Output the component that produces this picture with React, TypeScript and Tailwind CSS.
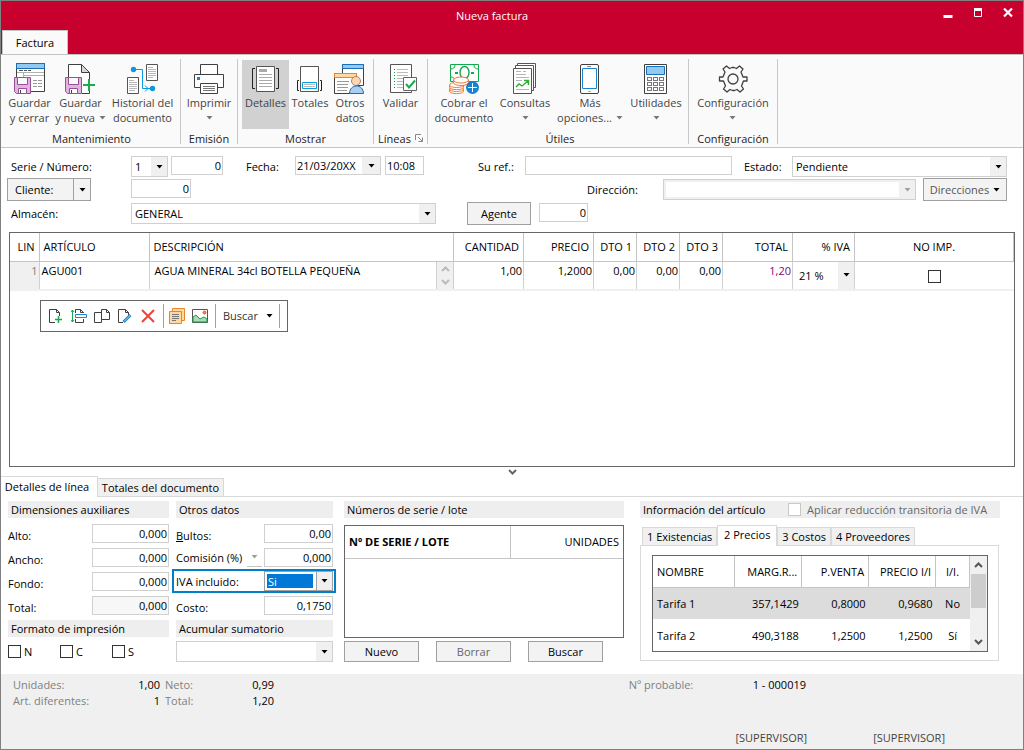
import { useState } from 'react';
import type { ReactNode } from 'react';
import clsx from 'clsx';

interface Tarifa {
  nombre: string;
  margen: string;
  venta: string;
  precio: string;
  incluido: string;
}

const TARIFAS: Tarifa[] = [
  { nombre: 'Tarifa 1', margen: '357,1429', venta: '0,8000', precio: '0,9680', incluido: 'No' },
  { nombre: 'Tarifa 2', margen: '490,3188', venta: '1,2500', precio: '1,2500', incluido: 'Sí' },
];

/* ---------- Small shared pieces ---------- */

function Caret({ className = 'text-black' }: { className?: string }) {
  return (
    <svg width="7" height="4" viewBox="0 0 7 4" className={clsx('shrink-0', className)}>
      <path d="M0.5 0h6L3.5 3.5z" fill="currentColor" />
    </svg>
  );
}

function Chevron({ up = false, className }: { up?: boolean; className?: string }) {
  return (
    <svg width="9" height="6" viewBox="0 0 9 6" className={className}>
      <path d={up ? 'M1 5l3.5-3.5L8 5' : 'M1 1l3.5 3.5L8 1'} fill="none" stroke="currentColor" strokeWidth="2" />
    </svg>
  );
}

interface SelectBoxProps {
  id: string;
  value: string;
  label?: string;
  disabled?: boolean;
  className?: string;
}

function SelectBox({ id, value, label, disabled, className }: SelectBoxProps) {
  return (
    <div className={clsx('relative flex h-[21px] border border-[#d0d0d0]', className)}>
      <select
        id={id}
        aria-label={label}
        disabled={disabled}
        defaultValue={value}
        className={clsx(
          'w-full appearance-none bg-white pl-[3px] pr-4 outline-none',
          disabled && 'border-2 border-[#f0f0f0]'
        )}
      >
        <option>{value}</option>
      </select>
      <span className="pointer-events-none absolute inset-y-0 right-0 flex w-4 items-center justify-center bg-[#f0f0f0]">
        <Caret className={disabled ? 'text-[#a0a0a0]' : 'text-black'} />
      </span>
    </div>
  );
}

interface TextBoxProps {
  id: string;
  value?: string;
  label?: string;
  readOnly?: boolean;
  className?: string;
}

function TextBox({ id, value = '', label, readOnly, className }: TextBoxProps) {
  return (
    <input
      id={id}
      type="text"
      aria-label={label}
      defaultValue={value}
      readOnly={readOnly}
      className={clsx('h-[19px] border border-[#d0d0d0] px-px outline-none', readOnly ? 'bg-[#f7f7f7]' : 'bg-white', className)}
    />
  );
}

function SectionTitle({ children }: { children: ReactNode }) {
  return <h2 className="flex h-[17px] items-center bg-[#eeeeee] px-[3px]">{children}</h2>;
}

function PushButton({ children, disabled, className }: { children: ReactNode; disabled?: boolean; className?: string }) {
  return (
    <button
      type="button"
      disabled={disabled}
      className={clsx('flex items-center justify-center border border-[#a0a0a0] bg-[#f3f3f3] disabled:text-[#666666]', className)}
    >
      {children}
    </button>
  );
}

/* ---------- Ribbon icons ---------- */

function RibbonSvg({ children }: { children: ReactNode }) {
  return (
    <svg width="32" height="32" viewBox="0 0 32 32" fill="none" className="shrink-0">
      {children}
    </svg>
  );
}

function Floppy() {
  return (
    <g>
      <path d="M0.5 14.5h16v16h-14l-2-2z" fill="#dfb4df" stroke="#9b4f9b" />
      <path d="M3.5 14.5h10v7h-10z" fill="#fafafa" stroke="#9b4f9b" />
      <path d="M4.5 25.5h8v5h-8z" fill="#fff" stroke="#9b4f9b" />
      <path d="M6.5 27v3" stroke="#444" />
    </g>
  );
}

function SaveCloseIcon() {
  return (
    <RibbonSvg>
      <path d="M2.5 0.5h28v28h-28z" fill="#fff" stroke="#404040" />
      <path d="M2.5 0.5h28v5h-28z" fill="#91c9f0" stroke="#1a6fb5" />
      <path d="M5 7.5h4M10 7.5h3M14 7.5h3" stroke="#555" />
      <path d="M3 9.5h27M9.5 10v4M10 12.5h20" stroke="#b0b0b0" />
      <path d="M19 17.5h4M24 17.5h4M19 20.5h4M24 20.5h4M19 23.5h4M24 23.5h4" stroke="#999" />
      <Floppy />
    </RibbonSvg>
  );
}

function SaveNewIcon() {
  return (
    <RibbonSvg>
      <path d="M3.5 14V1.5h13l8 8V30.5H16V14z" fill="#fff" />
      <path d="M3.5 14V1.5h13l8 8V17M17 30.5h7.5V28" stroke="#404040" />
      <path d="M16.5 1.5v8h8z" fill="#d8d8d8" stroke="#404040" />
      <Floppy />
      <path d="M18 22h12M24 16v12" stroke="#1aab4f" strokeWidth="2" />
    </RibbonSvg>
  );
}

function HistoryIcon() {
  return (
    <RibbonSvg>
      <path d="M0.5 14.5h11v16h-11zM19.5 1.5h11v16h-11z" fill="#fff" stroke="#555" />
      <path
        d="M2 17.5h5M2 19.5h8M2 21.5h8M2 23.5h8M2 25.5h8M2 27.5h6M21 4.5h5M21 6.5h8M21 8.5h8M21 10.5h8M21 12.5h8M21 14.5h5"
        stroke="#b8b8b8"
      />
      <path d="M6 6.5h9.5v19H26M18 22.5l3 3-3 3" stroke="#0a9ae0" />
      <circle cx="6.5" cy="6.5" r="2.7" fill="#0a9ae0" />
      <circle cx="25.5" cy="25.5" r="2.7" fill="#0a9ae0" />
    </RibbonSvg>
  );
}

function PrinterIcon() {
  return (
    <RibbonSvg>
      <path d="M7.5 1.5h17v10h-17z" fill="#fff" stroke="#404040" />
      <path d="M1.5 11.5h29v13h-29z" fill="#fff" stroke="#404040" />
      <path d="M4 14h3v3H4z" fill="#1d84cc" />
      <path d="M7.5 20.5h17v10h-17z" fill="#fff" stroke="#404040" />
      <path d="M10 23.5h12M10 25.5h12M10 27.5h12" stroke="#777" />
    </RibbonSvg>
  );
}

function DetailsIcon() {
  return (
    <RibbonSvg>
      <path d="M6.5 3.5h18v25h-18z" fill="#fff" stroke="#555" />
      <path d="M9 6h8v3H9z" fill="#aaa" />
      <path d="M9 11.5h13M9 14.5h13M9 17.5h13M9 20.5h13M9 23.5h13" stroke="#aaa" />
      <path d="M5 5.5H2.5v20H5M26 5.5h2.5v20H26" stroke="#222" />
    </RibbonSvg>
  );
}

function TotalsIcon() {
  return (
    <RibbonSvg>
      <path d="M6.5 3.5h18v25h-18z" fill="#fff" stroke="#555" />
      <path d="M8.5 19.5h14v6h-14z" stroke="#0a9ae0" />
      <path d="M10 21.5h11M10 23.5h11" stroke="#bbb" />
      <path d="M5 17.5H3.5v10H5M26 17.5h1.5v10H26" stroke="#222" />
    </RibbonSvg>
  );
}

function OtherDataIcon() {
  return (
    <RibbonSvg>
      <path d="M8.5 1.5h21v21h-21z" fill="#fff" stroke="#404040" />
      <path d="M8.5 1.5h21v4h-21z" fill="#91c9f0" stroke="#1a6fb5" />
      <path d="M0.5 10.5h22v20h-22z" fill="#fff" stroke="#404040" />
      <path d="M0.5 10.5h22v4h-22z" fill="#ffd9a0" stroke="#e8852a" />
      <path d="M3 18.5h12M3 21.5h11M3 24.5h11M3 27.5h10" stroke="#999" />
      <circle cx="22" cy="18" r="4.5" fill="#fbd7b8" stroke="#b98058" />
      <path d="M15.5 30.5c0-10 14-10 14 0z" fill="#a9d0f0" stroke="#1a6fb5" />
    </RibbonSvg>
  );
}

function ValidateIcon() {
  return (
    <RibbonSvg>
      <path d="M5.5 1.5h21v28h-21z" fill="#fff" stroke="#555" />
      <path d="M12 6.5h11M12 9.5h11M12 12.5h11M12 15.5h6M12 18.5h6M12 21.5h6M12 24.5h6" stroke="#bbb" />
      <path d="M9 6.5h1M9 12.5h1M9 18.5h1M9 24.5h1" stroke="#c33" />
      <path d="M9 9.5h1M9 15.5h1M9 21.5h1" stroke="#1aab4f" />
      <path d="M18.5 14.5h13v13h-13z" fill="#fff" stroke="#666" />
      <path d="M21 21l3 3.5 6-7" stroke="#1aab4f" strokeWidth="2" />
    </RibbonSvg>
  );
}

function ChargeIcon() {
  return (
    <RibbonSvg>
      <path d="M2.5 1.5h28v17h-28z" fill="#fff" stroke="#12a84c" />
      <path d="M7 2c0 3-2 4-4 4M26 2c0 3 2 4 4 4M3 14c2 0 4 1 4 4" stroke="#12a84c" />
      <ellipse cx="16.5" cy="9.5" rx="4.5" ry="6" stroke="#12a84c" strokeWidth="1.4" />
      <path d="M7 9h3v2H7zM23 9h3v2h-3z" fill="#12a84c" />
      <g fill="#fff" stroke="#ee7d3a">
        <path d="M1.5 26v2c0 3.5 14 3.5 14 0v-2" />
        <ellipse cx="8.5" cy="26" rx="7" ry="2.5" />
        <path d="M1.5 22v2c0 3.5 14 3.5 14 0v-2" />
        <ellipse cx="8.5" cy="22" rx="7" ry="2.5" />
        <path d="M5.5 17v2.5c0 4 15 4 15 0V17" />
        <ellipse cx="13" cy="17" rx="7.5" ry="3" />
      </g>
      <circle cx="24.5" cy="24.5" r="6.5" fill="#1583cf" />
      <path d="M20 24.5h9M24.5 20v9" stroke="#fff" />
    </RibbonSvg>
  );
}

function QueriesIcon() {
  return (
    <RibbonSvg>
      <path d="M8.5 0.5h18v24h-18z" fill="#fff" stroke="#555" />
      <path d="M6.5 2.5h18v25h-18z" fill="#fff" stroke="#555" />
      <path d="M4.5 5.5h18v25h-18z" fill="#fff" stroke="#555" />
      <path d="M7 8.5h5M14 8.5h3M7 11.5h10M7 14.5h13M7 17.5h6M7 26.5h13" stroke="#b5b5b5" />
      <path d="M7 24l3-3 3 2 6-5M15 17.5h4.5V22" stroke="#2fae2f" strokeWidth="1.4" />
    </RibbonSvg>
  );
}

function PhoneIcon() {
  return (
    <RibbonSvg>
      <rect x="6.5" y="1.5" width="18" height="29" rx="1.5" fill="#fff" stroke="#404040" />
      <path d="M8.5 5.5h14v20h-14z" fill="#fff" stroke="#1d84cc" />
      <path d="M13 3.5h4M14.5 28.5h2" stroke="#888" />
    </RibbonSvg>
  );
}

function CalculatorIcon() {
  return (
    <RibbonSvg>
      <path d="M4.5 1.5h22v29h-22z" fill="#fff" stroke="#404040" />
      <path d="M6.5 3.5h18v8h-18z" fill="#91c9f0" stroke="#1a6fb5" />
      {[14.5, 19.5, 24.5].map((y) =>
        [7.5, 13.5, 19.5].map((x) => <rect key={`${x}-${y}`} x={x} y={y} width="4" height="3" stroke="#777" />)
      )}
    </RibbonSvg>
  );
}

function GearIcon() {
  return (
    <RibbonSvg>
      <path
        d="M2.5 14h3.5l2-5-2-3 3.5-3 3 2.5 2.5-1h2l2.5 1 3-2.5 3.5 3-2 3 2 5H30v4h-3.5l-2 5 2 3-3.5 3-3-2.5-2.5 1h-2l-2.5-1-3 2.5-3.5-3 2-3-2-5H2.5z"
        stroke="#404040"
        strokeWidth="1.3"
        strokeLinejoin="round"
      />
      <circle cx="16" cy="16" r="5" stroke="#404040" strokeWidth="1.3" />
    </RibbonSvg>
  );
}

/* ---------- Ribbon ---------- */

interface RibbonButtonProps {
  icon: ReactNode;
  lines: string[];
  caret?: boolean;
  active?: boolean;
  className?: string;
}

function RibbonButton({ icon, lines, caret, active, className }: RibbonButtonProps) {
  return (
    <button
      type="button"
      className={clsx(
        'flex h-[69px] flex-col items-center pt-[3px] leading-[15px] whitespace-nowrap text-[#444444]',
        active && 'bg-[#d1d1d1]',
        className
      )}
    >
      {icon}
      <span>{lines[0]}</span>
      <span className="flex h-[15px] items-center gap-1">
        {lines[1]}
        {caret && <Caret className="text-[#777777]" />}
      </span>
    </button>
  );
}

interface RibbonGroupProps {
  title: string;
  launcher?: boolean;
  children: ReactNode;
  className?: string;
}

function RibbonGroup({ title, launcher, children, className }: RibbonGroupProps) {
  return (
    <section className={clsx('flex h-[85px] flex-col justify-between border-r border-[#c8c8c8] pt-px', className)}>
      <div className="flex justify-center">{children}</div>
      <h2 className="flex h-3 items-center justify-center gap-1 text-[#222222]">
        {title}
        {launcher && (
          <svg width="8" height="8" viewBox="0 0 8 8" fill="none" stroke="#888">
            <path d="M0.5 6V0.5H6M3 3l4 4M7.5 3.5v4h-4" />
          </svg>
        )}
      </h2>
    </section>
  );
}

function Ribbon() {
  return (
    <div className="flex h-[94px] border-t border-b border-[#c4c4c4] bg-[#fafafa] pt-1">
      <RibbonGroup title="Mantenimiento" className="w-[180px] pl-0.5">
        <RibbonButton icon={<SaveCloseIcon />} lines={['Guardar', 'y cerrar']} className="w-[50px]" />
        <RibbonButton icon={<SaveNewIcon />} lines={['Guardar', 'y nueva']} caret className="w-[52px]" />
        <RibbonButton icon={<HistoryIcon />} lines={['Historial del', 'documento']} className="w-[72px]" />
      </RibbonGroup>
      <RibbonGroup title="Emisión" className="w-[57px]">
        <RibbonButton icon={<PrinterIcon />} lines={['Imprimir']} caret />
      </RibbonGroup>
      <RibbonGroup title="Mostrar" className="w-[136px]">
        <RibbonButton icon={<DetailsIcon />} lines={['Detalles']} active className="w-[47px]" />
        <RibbonButton icon={<TotalsIcon />} lines={['Totales']} className="w-[42px]" />
        <RibbonButton icon={<OtherDataIcon />} lines={['Otros', 'datos']} className="w-[38px]" />
      </RibbonGroup>
      <RibbonGroup title="Líneas" launcher className="w-[54px]">
        <RibbonButton icon={<ValidateIcon />} lines={['Validar']} />
      </RibbonGroup>
      <RibbonGroup title="Útiles" className="w-[261px] pl-1">
        <RibbonButton icon={<ChargeIcon />} lines={['Cobrar el', 'documento']} className="w-[62px]" />
        <RibbonButton icon={<QueriesIcon />} lines={['Consultas']} caret className="w-[60px]" />
        <RibbonButton icon={<PhoneIcon />} lines={['Más', 'opciones...']} caret className="w-[70px]" />
        <RibbonButton icon={<CalculatorIcon />} lines={['Utilidades']} caret className="w-[62px]" />
      </RibbonGroup>
      <RibbonGroup title="Configuración" className="w-[89px]">
        <RibbonButton icon={<GearIcon />} lines={['Configuración']} caret />
      </RibbonGroup>
    </div>
  );
}

/* ---------- Title bar ---------- */

function TitleBar() {
  return (
    <header className="relative flex h-[53px] items-end bg-[#c8002d] px-px">
      <button type="button" className="h-6 w-[66px] border-x border-t border-[#c4c4c4] bg-[#fafafa]">
        Factura
      </button>
      <h1 className="absolute inset-x-0 top-[7px] mr-10 text-center text-white">Nueva factura</h1>
      <div className="absolute top-1.5 right-2.5 flex items-center gap-5 text-white">
        <button type="button" aria-label="Minimizar">
          <svg width="10" height="12" viewBox="0 0 10 12">
            <path d="M0.5 8h9v3h-9z" fill="currentColor" />
          </svg>
        </button>
        <button type="button" aria-label="Maximizar">
          <svg width="10" height="12" viewBox="0 0 10 12">
            <path d="M1.5 2v7.5h7V2z" fill="none" stroke="currentColor" />
            <path d="M1 1h8v3H1z" fill="currentColor" />
          </svg>
        </button>
        <button type="button" aria-label="Cerrar">
          <svg width="10" height="12" viewBox="0 0 10 12">
            <path d="M1 1.500l8 8M9 1.500l-8 8" stroke="currentColor" strokeWidth="2.2" />
          </svg>
        </button>
      </div>
    </header>
  );
}

/* ---------- Invoice header fields ---------- */

function InvoiceHeader() {
  return (
    <div className="pt-[7px] pr-4 pl-[6px]">
      <div className="flex h-6 items-start pt-px">
        <label htmlFor="serie" className="w-[124px] pt-[3px] pl-1">
          Serie / Número:
        </label>
        <SelectBox id="serie" value="1" className="w-[37px]" />
        <TextBox id="numero" label="Número" value="0" className="ml-[3px] w-[52px] text-right" />
        <label htmlFor="fecha" className="ml-[23px] w-[49px] pt-[3px]">
          Fecha:
        </label>
        <div className="relative">
          <TextBox id="fecha" value="21/03/20XX" className="w-[86px]" />
          <span className="pointer-events-none absolute top-px right-px flex h-[17px] w-[18px] items-center justify-center bg-[#f0f0f0]">
            <Caret />
          </span>
        </div>
        <TextBox id="hora" label="Hora" value="10:08" className="ml-1 w-[39px]" />
        <label htmlFor="ref" className="ml-[54px] w-[47px] pt-[3px]">
          Su ref.:
        </label>
        <TextBox id="ref" className="min-w-0 flex-[20]" />
        <label htmlFor="estado" className="ml-3 w-12 pt-[3px]">
          Estado:
        </label>
        <SelectBox id="estado" value="Pendiente" className="min-w-0 flex-[21]" />
      </div>
      <div className="flex h-6 items-start">
        <div className="-mt-px flex h-[23px] w-[84px] border border-[#a0a0a0] bg-[#f3f3f3]">
          <button type="button" className="flex-1 border-r border-[#a0a0a0] pl-[7px] text-left">
            Cliente:
          </button>
          <button type="button" aria-label="Opciones de cliente" className="flex w-4 items-center justify-center">
            <Caret />
          </button>
        </div>
        <TextBox id="cliente" label="Cliente" value="0" className="ml-10 w-[60px] text-right" />
        <label htmlFor="direccion" className="ml-auto w-[76px] pt-[3px]">
          Dirección:
        </label>
        <SelectBox id="direccion" value="" disabled className="w-[253px]" />
        <PushButton className="-mt-px ml-[7px] h-[23px] w-[84px] gap-1 text-[#555555]">
          Direcciones <Caret />
        </PushButton>
      </div>
      <div className="flex h-[29px] items-start">
        <label htmlFor="almacen" className="w-[124px] pt-[3px] pl-1">
          Almacén:
        </label>
        <SelectBox id="almacen" value="GENERAL" className="w-[305px]" />
        <PushButton className="-mt-px ml-[31px] h-[23px] w-16">Agente</PushButton>
        <TextBox id="agente" label="Agente" value="0" className="ml-2 w-[49px] text-right" />
      </div>
    </div>
  );
}

/* ---------- Line grid ---------- */

function LineToolbar() {
  const button = 'flex h-5 w-[23px] items-center justify-center';
  return (
    <div className="mt-[9px] ml-[30px] flex h-8 w-[248px] items-center border border-[#666666] bg-white pl-[3px]">
      <button type="button" aria-label="Nueva línea" className={button}>
        <svg width="16" height="16" viewBox="0 0 16 16" fill="none" stroke="#404040">
          <path d="M7 14.5H1.500v-13h7l3 3V8M8.500 1.500v3h3" />
          <path d="M7 11.500h7M10.500 8v7" stroke="#1aab4f" strokeWidth="1.5" />
        </svg>
      </button>
      <button type="button" aria-label="Insertar línea" className={button}>
        <svg width="16" height="16" viewBox="0 0 16 16" fill="none" stroke="#404040">
          <path d="M4.5 5V1.500h5l3 3V5M9.500 1.500v3h3M4.500 11v3.500h8V11" />
          <path d="M1.5 2v12M0 4l1.500-2L3 4M0 12l1.500 2L3 12" stroke="#1aab4f" />
          <path d="M4.5 6.500h11v3h-11z" fill="#fff" stroke="#1d84cc" />
        </svg>
      </button>
      <button type="button" aria-label="Duplicar línea" className={button}>
        <svg width="16" height="16" viewBox="0 0 16 16" fill="none" stroke="#404040">
          <path d="M7 4.500H0.500v10h7V11" />
          <path d="M7.500 1.500h5l3 3v7h-8zM12.500 1.500v3h3" fill="#fff" />
        </svg>
      </button>
      <button type="button" aria-label="Modificar línea" className={button}>
        <svg width="16" height="16" viewBox="0 0 16 16" fill="none" stroke="#404040">
          <path d="M6 14.500H1.500v-13h7l3 3V7M8.500 1.500v3h3" />
          <path d="M6.500 14l7-7" stroke="#1d84cc" strokeWidth="3" />
          <path d="M7 13.500l6.500-6.500" stroke="#9fd0f2" />
        </svg>
      </button>
      <button type="button" aria-label="Eliminar línea" className={button}>
        <svg width="16" height="16" viewBox="0 0 16 16" fill="none" stroke="#ef4136" strokeWidth="2">
          <path d="M2 2l12 12M14 2L2 14" />
        </svg>
      </button>
      <span className="ml-1 h-6 w-px bg-[#a0a0a0]" />
      <button type="button" aria-label="Notas" className={clsx(button, 'ml-px')}>
        <svg width="16" height="16" viewBox="0 0 16 16" fill="#ffd9a0" stroke="#e8852a">
          <path d="M3.500 0.500h12v12h-12z" />
          <path d="M0.500 3.500h12v12h-12z" />
          <path d="M3 6.500h7M3 8.500h7M3 10.500h7M3 12.500h4" stroke="#777" />
        </svg>
      </button>
      <button type="button" aria-label="Imagen" className={button}>
        <svg width="16" height="16" viewBox="0 0 16 16" fill="none" stroke="#555">
          <path d="M0.500 1.500h15v13h-15z" fill="#fff" />
          <path d="M1 9l3-2 4 4 4-2 3 2v3H1z" fill="#a8dcb4" stroke="#1a9a48" />
          <circle cx="12.5" cy="4.5" r="1.5" fill="#f08050" stroke="#e0602a" />
        </svg>
      </button>
      <span className="ml-1 h-6 w-px bg-[#a0a0a0]" />
      <button type="button" className="flex h-5 items-center gap-2 pl-[7px] text-[#333333]">
        Buscar <Caret />
      </button>
      <span className="ml-1.5 h-6 w-px bg-[#a0a0a0]" />
    </div>
  );
}

const HEADINGS = ['LIN', 'ARTÍCULO', 'DESCRIPCIÓN', 'CANTIDAD', 'PRECIO', 'DTO 1', 'DTO 2', 'DTO 3', 'TOTAL', '% IVA', 'NO IMP.'];

function LineGrid() {
  const cell = 'border border-[#d0d0d0] bg-white pt-px pr-px align-top';
  return (
    <div className="mr-2 ml-2 flex-1 border border-[#666666] bg-white">
      <table className="w-full table-fixed border-collapse">
        <colgroup>
          <col className="w-[29px]" />
          <col className="w-[110px]" />
          <col />
          <col className="w-[70px]" />
          <col className="w-[70px]" />
          <col className="w-[43px]" />
          <col className="w-[43px]" />
          <col className="w-[43px]" />
          <col className="w-[70px]" />
          <col className="w-[62px]" />
          <col className="w-[159px]" />
        </colgroup>
        <thead>
          <tr className="h-7">
            {HEADINGS.map((heading, i) => (
              <th
                key={heading}
                className={clsx(
                  'border-r border-b border-[#c4c4c4] px-1 font-normal',
                  i === 1 || i === 2 ? 'text-left' : i === 10 ? 'text-center' : 'text-right'
                )}
              >
                {heading}
              </th>
            ))}
          </tr>
        </thead>
        <tbody>
          <tr className="border-b-2 border-[#f0f0f0] text-right">
            <td className="border-r border-[#d0d0d0] bg-[#f0f0f0] pt-px pr-px align-top text-[#808080]">1</td>
            <td className={clsx(cell, 'pl-0.5 text-left')}>AGU001</td>
            <td className="border border-[#d0d0d0] p-0 text-left">
              <div className="flex h-[27px]">
                <span className="flex-1 pt-px pl-[5px]">AGUA MINERAL 34cl BOTELLA PEQUEÑA</span>
                <span className="flex w-[17px] flex-col items-center justify-between border-l border-[#d0d0d0] bg-[#f0f0f0] py-1 text-[#bbbbbb]">
                  <Chevron up />
                  <Chevron />
                </span>
              </div>
            </td>
            <td className={cell}>1,00</td>
            <td className={cell}>1,2000</td>
            <td className={cell}>0,00</td>
            <td className={cell}>0,00</td>
            <td className={cell}>0,00</td>
            <td className={clsx(cell, 'text-[#800080]')}>1,20</td>
            <td className="border border-[#d0d0d0] p-0">
              <div className="relative flex h-[27px]">
                <select aria-label="% IVA" defaultValue="21 %" className="w-full appearance-none bg-white pl-1.5 outline-none">
                  <option>21 %</option>
                </select>
                <span className="pointer-events-none absolute inset-y-0 right-0 flex w-4 items-center justify-center bg-[#f0f0f0]">
                  <Caret />
                </span>
              </div>
            </td>
            <td className="text-center">
              <input type="checkbox" aria-label="No imprimir" className="size-[13px] appearance-none border border-[#333333] align-middle" />
            </td>
          </tr>
        </tbody>
      </table>
      <LineToolbar />
    </div>
  );
}

/* ---------- Line details ---------- */

interface FieldRowProps {
  id: string;
  label: ReactNode;
  value: string;
  readOnly?: boolean;
  width: string;
}

function FieldRow({ id, label, value, readOnly, width }: FieldRowProps) {
  return (
    <div className="flex h-6 items-start justify-between">
      <label htmlFor={id} className="pt-1">
        {label}
      </label>
      <TextBox id={id} value={value} readOnly={readOnly} className={clsx('text-right', width)} />
    </div>
  );
}

function Dimensions() {
  return (
    <section className="w-[161px]">
      <SectionTitle>Dimensiones auxiliares</SectionTitle>
      <div className="pt-1.5">
        <FieldRow id="alto" label="Alto:" value="0,000" width="w-[77px]" />
        <FieldRow id="ancho" label="Ancho:" value="0,000" width="w-[77px]" />
        <FieldRow id="fondo" label="Fondo:" value="0,000" width="w-[77px]" />
        <FieldRow id="total" label="Total:" value="0,000" readOnly width="w-[77px]" />
      </div>
      <SectionTitle>Formato de impresión</SectionTitle>
      <div className="flex pt-[7px]">
        {['N', 'C', 'S'].map((format) => (
          <label key={format} className="flex w-[52px] items-center gap-[3px]">
            <input type="checkbox" className="size-[13px] appearance-none border border-[#333333] bg-white" />
            {format}
          </label>
        ))}
      </div>
    </section>
  );
}

function OtherData() {
  return (
    <section className="ml-[7px] w-[157px]">
      <SectionTitle>Otros datos</SectionTitle>
      <div className="pt-1.5">
        <FieldRow
          id="bultos"
          label={
            <>
              <span className="underline">B</span>ultos:
            </>
          }
          value="0,00"
          width="w-[69px]"
        />
        <div className="flex h-[21px] items-start">
          <label htmlFor="comision" className="flex-1 pt-0.5">
            Comisión (%)
          </label>
          <button type="button" aria-label="Tipo de comisión" className="mr-0.5 flex h-[19px] w-[15px] items-center justify-center border-b border-[#c4c4c4]">
            <Caret className="text-[#a0a0a0]" />
          </button>
          <TextBox id="comision" value="0,000" className="w-[69px] text-right" />
        </div>
        <div className="-mr-[3px] -ml-1 flex h-6 items-center border-2 border-[#0080c8] pl-0.5">
          <label htmlFor="iva" className="flex-1">
            IVA incluido:
          </label>
          <div className="relative mr-px flex h-5 w-[69px] border border-[#a0a0a0] bg-white p-0.5">
            <select id="iva" defaultValue="Si" className="w-[46px] appearance-none bg-[#0078d7] pl-px text-white outline-none">
              <option>Si</option>
            </select>
            <span className="pointer-events-none absolute inset-y-0 right-0 flex w-4 items-center justify-center border-l border-[#a0a0a0] bg-[#f0f0f0]">
              <Caret />
            </span>
          </div>
        </div>
        <div className="pt-[3px]">
          <FieldRow id="costo" label="Costo:" value="0,1750" width="w-[69px]" />
        </div>
      </div>
      <SectionTitle>
        <label htmlFor="sumatorio">Acumular sumatorio</label>
      </SectionTitle>
      <SelectBox id="sumatorio" value="" className="mt-1" />
    </section>
  );
}

function SerialNumbers() {
  return (
    <section className="ml-[11px] w-[280px]">
      <SectionTitle>Números de serie / lote</SectionTitle>
      <div className="mt-[7px] h-[113px] border border-[#666666] bg-white">
        <table className="w-full table-fixed border-collapse">
          <thead>
            <tr className="h-8 border-b border-[#c4c4c4]">
              <th className="w-[165px] border-r border-[#c4c4c4] px-1 text-left font-bold">Nº DE SERIE / LOTE</th>
              <th className="px-1 text-right font-normal">UNIDADES</th>
            </tr>
          </thead>
        </table>
      </div>
      <div className="mt-[3px] flex gap-[17px]">
        <PushButton className="h-[21px] w-[75px]">Nuevo</PushButton>
        <PushButton disabled className="h-[21px] w-[75px]">
          Borrar
        </PushButton>
        <PushButton className="h-[21px] w-[75px]">Buscar</PushButton>
      </div>
    </section>
  );
}

const ARTICLE_TABS = ['1 Existencias', '2 Precios', '3 Costos', '4 Proveedores'];

function ArticleInfo() {
  const [tab, setTab] = useState('2 Precios');

  return (
    <section className="ml-4 w-[360px]">
      <div className="flex h-[17px] items-center bg-[#eeeeee] pl-[3px]">
        <h2 className="w-[145px]">Información del artículo</h2>
        <label className="flex items-center gap-1.5 text-[#666666]">
          <input type="checkbox" className="size-[13px] appearance-none border border-[#c8c8c8] bg-white" />
          Aplicar reducción transitoria de IVA
        </label>
      </div>
      <div className="mt-[7px] flex h-5 items-end pl-0.5">
        {ARTICLE_TABS.map((name) => (
          <button
            key={name}
            type="button"
            onClick={() => setTab(name)}
            className={clsx(
              'border-x border-t border-[#d9d9d9] px-1 whitespace-nowrap',
              name === tab ? 'relative z-10 -mb-px h-[21px] bg-white pb-1' : 'h-[18px] bg-[#f0f0f0]',
              name === '2 Precios' && 'w-[60px]'
            )}
          >
            {name}
          </button>
        ))}
      </div>
      <div className="mr-px h-[116px] border border-[#d9d9d9] bg-white pt-[9px] pr-[10px] pl-[11px]">
        <div className="flex h-[97px] border border-[#666666]">
          <table className="flex-1 table-fixed border-collapse">
            <thead>
              <tr className="h-[31px] border-b border-[#c4c4c4]">
                <th className="w-[82px] border-r border-[#c4c4c4] px-1 text-left font-normal">NOMBRE</th>
                <th className="w-[67px] border-r border-[#c4c4c4] px-1 text-right font-normal">MARG.R...</th>
                <th className="w-[67px] border-r border-[#c4c4c4] px-1 text-right font-normal">P.VENTA</th>
                <th className="w-[67px] border-r border-[#c4c4c4] px-1 text-right font-normal whitespace-nowrap">PRECIO I/I</th>
                <th className="w-[34px] border-r border-[#c4c4c4] font-normal">I/I.</th>
              </tr>
            </thead>
            <tbody>
              {TARIFAS.map((tarifa, i) => (
                <tr key={tarifa.nombre} className={clsx('h-8 text-right', i === 0 && 'bg-[#dcdcdc]')}>
                  <td className="px-1 text-left">{tarifa.nombre}</td>
                  <td className="px-[3px]">{tarifa.margen}</td>
                  <td className="px-[3px]">{tarifa.venta}</td>
                  <td className="px-[3px]">{tarifa.precio}</td>
                  <td className="text-center">{tarifa.incluido}</td>
                </tr>
              ))}
            </tbody>
          </table>
          <div className="flex w-[17px] flex-col items-center bg-[#f0f0f0] py-1.5 text-[#555555]">
            <Chevron up />
            <span className="mt-1.5 h-[34px] w-[15px] bg-[#cdcdcd]" />
            <Chevron className="mt-auto" />
          </div>
        </div>
      </div>
    </section>
  );
}

function LineDetails() {
  return (
    <div>
      <div className="flex h-[21px] items-end">
        <button type="button" className="h-[21px] w-[97px] border-t border-r border-[#d9d9d9] bg-white pr-1 pb-0.5">
          Detalles de línea
        </button>
        <button type="button" className="h-[19px] w-[126px] border-t border-r border-b border-[#d9d9d9] bg-[#f0f0f0] whitespace-nowrap">
          Totales del documento
        </button>
        <span className="flex-1 border-b border-[#d9d9d9]" />
      </div>
      <div className="flex h-[177px] pt-1 pl-[7px]">
        <Dimensions />
        <OtherData />
        <SerialNumbers />
        <ArticleInfo />
      </div>
    </div>
  );
}

/* ---------- Status bar ---------- */

function StatusBar() {
  return (
    <footer className="flex h-[75px] flex-col justify-between bg-[#f0f0f0] pt-[3px] pb-[3px] leading-4">
      <div className="flex pl-3">
        <dl className="grid grid-cols-[100px_47px_5px_60px_49px] text-[#808080]">
          <dt>Unidades:</dt>
          <dd className="text-right text-black">1,00</dd>
          <dt className="col-start-4">Neto:</dt>
          <dd className="text-right text-black">0,99</dd>
          <dt className="col-start-1 whitespace-nowrap">Art. diferentes:</dt>
          <dd className="text-right text-black">1</dd>
          <dt className="col-start-4">Total:</dt>
          <dd className="text-right text-black">1,20</dd>
        </dl>
        <p className="mr-[217px] ml-auto flex">
          <span className="w-[124px] text-[#808080]">Nº probable:</span>
          <span>1 - 000019</span>
        </p>
      </div>
      <div className="flex justify-end gap-[66px] pr-[78px] text-[#444444]">
        <span>[SUPERVISOR]</span>
        <span>[SUPERVISOR]</span>
      </div>
    </footer>
  );
}

export default function App() {
  return (
    <div className="flex min-h-screen flex-col border border-[#808080] bg-white font-['Open_Sans',sans-serif] text-[11px] leading-[15px] text-black">
      <TitleBar />
      <Ribbon />
      <InvoiceHeader />
      <LineGrid />
      <button type="button" aria-label="Plegar detalles" className="flex h-[9px] items-center justify-center text-[#666666]">
        <Chevron />
      </button>
      <LineDetails />
      <StatusBar />
    </div>
  );
}
